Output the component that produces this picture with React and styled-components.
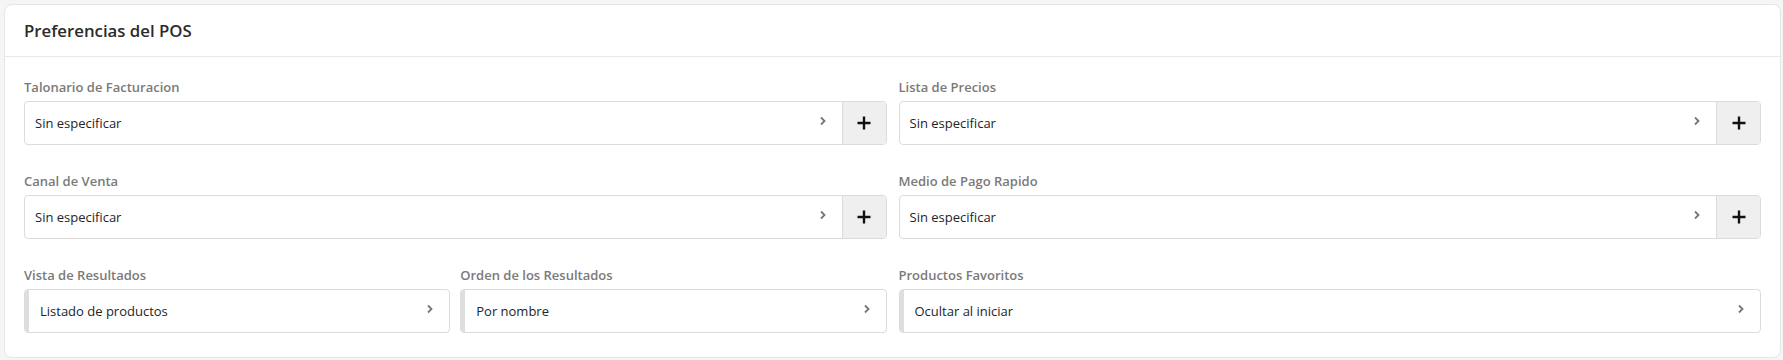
import React from "react";
import styled, { createGlobalStyle } from "styled-components";

const Global = createGlobalStyle`
  html, body { margin: 0; padding: 0; background: #f5f5f5; }
  body { font-family: "Open Sans", "Noto Sans", Arial, sans-serif; color: #212529; }
  * { box-sizing: border-box; }
`;

const Page = styled.div`
  padding: 4px 2px 2px 4px;
`;

const Card = styled.section`
  background: #fff;
  border: 1px solid #e6e6e6;
  border-radius: 8px;
`;

const CardHeader = styled.header`
  height: 52px;
  padding: 0 19px;
  display: flex;
  align-items: center;
  border-bottom: 1px solid #e9e9e9;
`;

const Title = styled.h2`
  margin: 0;
  font-size: 16.8px;
  font-weight: 600;
  color: #2b2b2b;
`;

const CardBody = styled.div`
  padding: 20px 19px 24px;
  display: flex;
  flex-direction: column;
  gap: 26px;
`;

const Row = styled.div`
  display: grid;
  grid-template-columns: 1fr 1fr;
  column-gap: 12px;
`;

const SubRow = styled.div`
  display: grid;
  grid-template-columns: 1fr 1fr;
  column-gap: 10px;
`;

const Field = styled.div`
  display: flex;
  flex-direction: column;
  min-width: 0;
`;

const Label = styled.label`
  font-size: 13px;
  line-height: 20px;
  font-weight: 600;
  color: #7a7a7a;
  margin-bottom: 4px;
`;

const Group = styled.div`
  display: flex;
  height: 44px;
  border: 1px solid #dcdcdc;
  border-radius: 4px;
  overflow: hidden;
  background: #fff;
`;

const Select = styled.div`
  flex: 1;
  display: flex;
  align-items: center;
  justify-content: space-between;
  padding: 0 15px 0 ${(p) => (p.$accent ? "11px" : "10px")};
  border-left: ${(p) => (p.$accent ? "4px solid #dedede" : "none")};
  font-size: 13px;
  color: #212529;
  cursor: pointer;
`;

const Chevron = styled.svg`
  width: 8px;
  height: 10px;
  margin-top: -4px;
  flex: none;
`;

const AddButton = styled.button`
  width: 44px;
  flex: none;
  border: none;
  border-left: 1px solid #dcdcdc;
  background: #efefef;
  display: flex;
  align-items: center;
  justify-content: center;
  padding: 0;
  cursor: pointer;
`;

const ChevronIcon = () => (
  <Chevron viewBox="0 0 8 10">
    <path d="M2 1.5 L5.5 5 L2 8.5" fill="none" stroke="#777" strokeWidth="1.8" />
  </Chevron>
);

const PlusIcon = () => (
  <svg width="14" height="14" viewBox="0 0 14 14">
    <path d="M7 0.5 V13.5 M0.5 7 H13.5" stroke="#111" strokeWidth="2.4" />
  </svg>
);

const SelectField = ({ label, value, add, accent }) => (
  <Field>
    <Label>{label}</Label>
    <Group>
      <Select $accent={accent}>
        <span>{value}</span>
        <ChevronIcon />
      </Select>
      {add && (
        <AddButton aria-label="Agregar">
          <PlusIcon />
        </AddButton>
      )}
    </Group>
  </Field>
);

export default function App() {
  return (
    <Page>
      <Global />
      <Card>
        <CardHeader>
          <Title>Preferencias del POS</Title>
        </CardHeader>
        <CardBody>
          <Row>
            <SelectField label="Talonario de Facturacion" value="Sin especificar" add />
            <SelectField label="Lista de Precios" value="Sin especificar" add />
          </Row>
          <Row>
            <SelectField label="Canal de Venta" value="Sin especificar" add />
            <SelectField label="Medio de Pago Rapido" value="Sin especificar" add />
          </Row>
          <Row>
            <SubRow>
              <SelectField label="Vista de Resultados" value="Listado de productos" accent />
              <SelectField label="Orden de los Resultados" value="Por nombre" accent />
            </SubRow>
            <SelectField label="Productos Favoritos" value="Ocultar al iniciar" accent />
          </Row>
        </CardBody>
      </Card>
    </Page>
  );
}
